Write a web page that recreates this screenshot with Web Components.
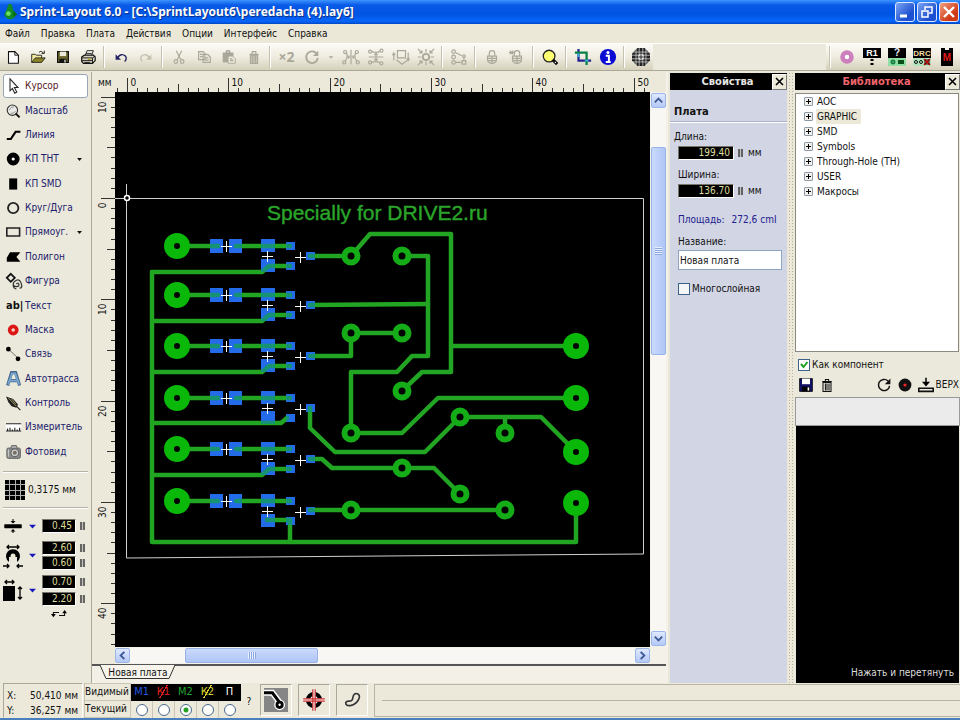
<!DOCTYPE html>
<html lang="ru">
<head>
<meta charset="utf-8">
<title>Sprint-Layout 6.0</title>
<style>
html,body{margin:0;height:100%}
body{font:10px/14px "DejaVu Sans Condensed","DejaVu Sans",sans-serif;color:#111;background:#ece9d8;overflow:hidden;
--face:#ebe9db;--edge:#aaa899;--navy:#20206c}
</style>
</head>
<body>
<app-window></app-window>
<script>
const BASE = `*{box-sizing:border-box}button,input{font:inherit;color:inherit;margin:0}button{padding:0;border:0;background:none}`;
function component(tag, css, html, ready) {
  const tpl = document.createElement('template');
  tpl.innerHTML = `<style>${BASE}${css}</style>`;
  customElements.define(tag, class extends HTMLElement {
    connectedCallback() {
      if (this.shadowRoot) return;
      const root = this.attachShadow({mode: 'open'});
      root.append(tpl.content.cloneNode(true));
      const body = document.createElement('template');
      body.innerHTML = typeof html === 'function' ? html(this) : html;
      root.append(body.content);
      if (ready) ready(this, root);
    }
  });
}

/* Icons, drawn in a 20 by 20 box */
const G = 'stroke="#aaa899" fill="none" stroke-width="1.3"';
const lock = `<g ${G}><path d="M7 9V6a3 3 0 0 1 6 0v3"/><path d="M5 9h10v4a5 4 0 0 1-10 0zM5 11.500h10M5.500 14h9M10 9v8"/></g>`;
const ICONS = {
  app: '<path d="M7 3a3 3 0 0 1 6 0l1 5a7 6 0 1 1-9 1z" fill="#128a28"/><circle cx="8" cy="12" r="3" fill="#6ddd63"/><path d="M14 8l5 5-5 4z" fill="#0a6d1d"/>',
  new: '<path d="M5 4h7l4 4v9H5z" fill="#fff" stroke="#111" stroke-width="1.200"/><path d="M12 4v4h4" fill="none" stroke="#111"/>',
  open: '<path d="M3 16V7h4l1 1h6v3" fill="#f0e89a" stroke="#222"/><path d="M3 16l4-5h11l-4 5z" fill="#8c8424" stroke="#222"/><path d="M11 5q3-3 5 1m1-3v3h-3" fill="none" stroke="#111"/>',
  save: '<path d="M4 4h12v12H4z" fill="#6b672a" stroke="#111" stroke-width="1.300"/><path d="M6.500 4h7v5h-7z" fill="#ece9d8"/><path d="M6 12h8v4.500H6z" fill="#111"/><path d="M11.500 13h1.500v3h-1.500z" fill="#ddd"/>',
  print: '<path d="M7 8l2-5h7l-2 5M8 6h6" fill="#fff" stroke="#111"/><path d="M3 10l3-2h10l2 2v4l-3 3H5l-2-2z" fill="#d6d3c3" stroke="#111" stroke-width="1.300"/><path d="M3 11h12l3-2M3 14h12m0-3v6M6 16h6" stroke="#111" fill="none"/><path d="M10 12.500h3" stroke="#b5a622" stroke-width="1.500"/>',
  undo: '<path d="M6 11q4-6 9-2 2 3-1 6" fill="none" stroke="#202060" stroke-width="1.500"/><path d="M4 7v6h6z" fill="#202060"/>',
  redo: '<path d="M14 11q-4-6-9-2-2 3 1 6" fill="none" stroke="#c4c1b1" stroke-width="1.500"/><path d="M16 7v6h-6z" fill="#c4c1b1"/>',
  cut: `<g ${G}><path d="M7 3l5 10M13 3L8 13"/><circle cx="6.500" cy="15" r="2"/><circle cx="13.500" cy="15" r="2"/></g>`,
  copy: `<g ${G}><path d="M4 4h5l2 2v7H4zM9 7h5l3 3v6H9z" fill="#eceadd"/><path d="M5.500 7h3M5.500 9.500h3M11 11h4M11 13.500h4"/></g>`,
  paste: `<path d="M3 5h12v11H3z" fill="#aaa899"/><path d="M7 3h4v3H7z" fill="#ccc9ba" stroke="#999"/><path d="M9 9h5l3 3v5H9z" fill="#eceadd" stroke="#aaa899"/><path d="M11 12h3m-3 2h4" ${G}/>`,
  trashg: `<g ${G}><path d="M5 7h10M8 7V4h4v3"/><path d="M6 8h8v9H6z" fill="#c6c3b4"/><path d="M8.500 8v8M11.500 8v8"/></g>`,
  trash: '<path d="M4 5.500h12M8 5V3h4v2M5 7h10v11H5zM8 8v9M10 8v9M12.500 8v9" fill="none" stroke="#111" stroke-width="1.300"/>',
  rotg: '<path d="M15 6a6.500 6.500 0 1 0 1.500 5" fill="none" stroke="#aaa899" stroke-width="2"/><path d="M17 3v6h-6z" fill="#aaa899"/>',
  rot: '<path d="M15 5a7 7 0 1 0 2 6" fill="none" stroke="#111" stroke-width="1.800"/><path d="M18 2v7h-7z" fill="#111"/>',
  drop: '<path d="M4 8h12l-6 6z" fill="#aaa899"/>',
  mirh: `<g ${G}><circle cx="3.500" cy="4.500" r="1.700"/><circle cx="16.500" cy="4.500" r="1.700"/><circle cx="2.500" cy="16" r="1.700"/><circle cx="17.500" cy="16" r="1.700"/><path d="M5 5.500q2 5-1.500 9M15 5.500q-2 5 1.500 9M10 2v16M6 10h3M11 10h3M7.500 8v4M12.500 8v4"/></g>`,
  mirv: `<g ${G}><circle cx="3.500" cy="4" r="1.700"/><circle cx="16" cy="3" r="1.700"/><circle cx="3.500" cy="16" r="1.700"/><circle cx="16" cy="17" r="1.700"/><path d="M5 4q6 2 9.500-.5M5 16q6-2 9.500.5M2 10h16M10 6.500v7M8 8l2-2 2 2M8 12l2 2 2-2"/></g>`,
  flip: `<g ${G}><path d="M6 3h9v8H6zM2 14V6M.500 8L2 5.500 3.500 8M18 5v9M16.500 11.500L18 14l1.500-2.500M5 13l6 5 6-4"/></g>`,
  snap: `<g ${G}><circle cx="10" cy="10" r="3.500" stroke-width="2"/><path d="M1 1l4 4M19 1l-4 4M1 19l4-4M19 19l-4-4M2.500 5.500h3v-3M17.500 5.500h-3v-3M2.500 14.500h3v3M17.500 14.500h-3v3M1 10h4M15 10h4M10 1v4M10 15v4"/></g>`,
  nodes: `<g ${G}><circle cx="4" cy="4" r="2"/><circle cx="4" cy="10" r="2"/><circle cx="4" cy="16" r="2"/><path d="M6 5l7 3.500M6 16h7M15.500 13v-3"/><path d="M13.500 14h4v4h-4z"/><circle cx="15.500" cy="9" r="1.500"/></g>`,
  lock: lock,
  unlock: lock + `<path d="M2 3l4 4M6 3L2 7M1 5h6" ${G}/>`,
  find: '<circle cx="9" cy="9" r="6.500" fill="#ffff72" stroke="#222" stroke-width="1.400"/><path d="M13 13l5 5" stroke="#111" stroke-width="3.500"/><circle cx="16" cy="16" r=".800" fill="#eee"/>',
  crop: '<path d="M5 1v13h14" fill="none" stroke="#23238e" stroke-width="2.500"/><path d="M1 5h13v14" fill="none" stroke="#078043" stroke-width="2.500"/><path d="M5 6v4M12 14h4" stroke="#2fb7dc" stroke-width="2"/>',
  info: '<circle cx="10" cy="10" r="9" fill="#0a0ad4"/><circle cx="10" cy="5" r="1.700" fill="#fff"/><path d="M7.500 8.500H11V15M7.500 15.500h5.500" stroke="#fff" stroke-width="2.200" fill="none"/>',
  mesh: '<path d="M6 0h8l6 6v8l-6 6H6l-6-6V6z" fill="#222"/><path d="M1 4.500h18M0 8h20M0 12h20M1 15.500h18M4.500 1v18M8 0v20M12 0v20M15.500 1v18" stroke="#ddd" stroke-width=".800"/><circle cx="10" cy="10" r="3.500" fill="#ddd"/><path d="M7 10h6m-3-3v6" stroke="#222"/>',
  ring: '<circle cx="10" cy="10" r="4.500" fill="#fff" stroke="#cc7fbc" stroke-width="4.500"/>',
  r1: '<path d="M1 1h18v10H1z" fill="#000"/><path d="M10 12v2M10 16v2" stroke="#000" stroke-width="3"/><text x="10" y="9" font-family="Liberation Sans" font-size="9" font-weight="700" text-anchor="middle" fill="#fff">R1</text>',
  quest: '<path d="M1 1h18v10H1z" fill="#000"/><path d="M1 11h18v8H1z" fill="#8fdfa5"/><path d="M11 13h6v4h-6z" fill="#064f16"/><circle cx="6" cy="15" r="2" fill="#3aa45a" stroke="#063"/><text x="10" y="9" font-family="Liberation Sans" font-size="10" font-weight="700" text-anchor="middle" fill="#e7efff">?</text>',
  drc: '<path d="M1 1h18v10H1z" fill="#000"/><path d="M1 11h18v8H1z" fill="#b3e3bd"/><circle cx="4" cy="15" r="1.500" fill="none" stroke="#111"/><circle cx="9" cy="15" r="1.500" fill="none" stroke="#111"/><path d="M12 12l6 6m0-6l-6 6" stroke="#c00" stroke-width="1.500"/><path d="M13 13h4v4h-4z" fill="none" stroke="#400"/><text x="10" y="9" font-family="Liberation Sans" font-size="8" font-weight="700" text-anchor="middle" fill="#f3dba3">DRC</text>',
  macro: '<path d="M4 1h4v2h4V1h4v18H4z" fill="#000"/><text x="10" y="14" font-family="Liberation Sans" font-size="10" font-weight="700" text-anchor="middle" fill="#e01818">M</text>',
  cursor: '<path d="M5 1v15l3-3 3 6 2.500-1.500L10.500 12H15z" fill="#fff" stroke="#222" stroke-width="1.300"/>',
  zoom: '<circle cx="8" cy="9" r="6.500" fill="#e8e8e4" stroke="#333" stroke-width="1.400"/><path d="M4 9q2-5 6-4M6 13q5 0 6-3" stroke="#888" fill="none"/><path d="M12 13l5 5" stroke="#111" stroke-width="2.500"/>',
  line: '<path d="M1 15h5l6-9h6" fill="none" stroke="#000" stroke-width="2.600"/>',
  tht: '<circle cx="9" cy="10" r="5" fill="#fff" stroke="#000" stroke-width="6"/>',
  smd: '<path d="M4 3h10v14H4z"/>',
  circle: '<circle cx="9" cy="10" r="6.500" fill="none" stroke="#222" stroke-width="2.300"/>',
  rect: '<path d="M1 5h16v10H1z" fill="none" stroke="#222" stroke-width="2"/>',
  poly: '<path d="M5 4h13l-5 6 5 6H1v-5z"/>',
  shape: '<path d="M6 1l5 5-5 5-5-5z" fill="none" stroke="#111" stroke-width="2.200"/><path d="M13 14q2-3 3 0t-3 3-4-3 4-5 6 4-2 6M9 15q0 4 4 5" fill="none" stroke="#333" stroke-width="1.500"/>',
  mask: '<circle cx="9" cy="10" r="4.500" fill="#fbd0c8" stroke="#dc1515" stroke-width="4.500"/>',
  link: '<path d="M3 4l12 11" stroke="#555"/><circle cx="3" cy="4" r="2" stroke="#000" stroke-width="2"/><circle cx="15" cy="16" r="2" stroke="#000" stroke-width="2"/>',
  auto: '<path d="M2 18L7 2h5l5 16M5 12h9" stroke="#46688c" stroke-width="4" fill="none"/><path d="M2.500 17L7.500 3h4l5 14M5 12h9" stroke="#79a7d0" stroke-width="2.300" fill="none"/>',
  probe: '<path d="M0 2l9 3 6 7-2 4-6-2-4-5z" fill="#222"/><path d="M3 4l10 10M7 5l5 6" stroke="#bbb26b"/><path d="M13 14l5 5" stroke="#111" stroke-width="1.300"/>',
  meas: '<path d="M0 5h19v10H0z" fill="#fff"/><path d="M0 6h19M0 15h19M2 15v-3M5 15v-4M8 15v-2M11 15v-4M14 15v-2M17 15v-4" stroke="#222" stroke-width="1.400"/>',
  photo: '<rect x="1" y="5" width="17" height="13" rx="2" fill="#8b8d8e" stroke="#555"/><path d="M6 5l1-3h6l1 3" fill="#aaa" stroke="#555"/><circle cx="11" cy="11" r="5" fill="#ccc" stroke="#444"/><circle cx="11" cy="11" r="2.500" fill="#776d64"/><path d="M3 7v9" stroke="#ddd"/>',
  grid: '<path d="M0 0h20v20H0z" fill="#000"/><path d="M0 4.500h20M0 10.500h20M0 15.500h20M4.500 0v20M10.500 0v20M15.500 0v20" stroke="#b0b0b0" stroke-width="1"/>',
  width: '<path d="M2 9h16v2.500H2z" stroke="#000" stroke-width="1.500" stroke-linejoin="round"/><path d="M7.500 5h5L10 7.500zM7.500 15.500h5L10 13z"/><path d="M10 3v3M10 15v2" stroke="#000"/>',
  pad: '<path d="M4 1h12M6-1L4 1l2 2M14-1l2 2-2 2" fill="none" stroke="#000" stroke-width="1.300"/><path d="M6 16a7 7 0 1 1 8 0V11H6z"/><circle cx="10" cy="10" r="2.500" fill="#ece9d8"/><path d="M0 20h6M4 18l2 2-2 2M20 20h-6M16 18l-2 2 2 2" fill="none" stroke="#000" stroke-width="1.300"/>',
  size: '<path d="M2 1h9M4-1L2 1l2 2M9-1l2 2-2 2M17 6v12M15 8l2-2 2 2M15 16l2 2 2-2" fill="none" stroke="#000" stroke-width="1.300"/><path d="M0 5h12v15H0z"/>',
  swap: '<path d="M3 12V8h7M17 8v4h-7" fill="none" stroke="#111" stroke-width="1.300"/><path d="M0 10h6l-3 4zM14 9h6l-3-4z"/>',
  tri: '<path d="M0 5h20L10 16z" fill="#1818b8"/>',
  trib: '<path d="M3 6h14l-7 8z" fill="#111"/>',
  dot: '<circle cx="10" cy="10" r="8" fill="#111"/><circle cx="10" cy="10" r="2" fill="#f22"/>',
  down: '<path d="M10 1v7M1 14h18v4H1z" stroke="#111" stroke-width="2" fill="none"/><path d="M5 6h10l-5 6z"/>',
  saveb: '<path d="M2 2h16v16H2z" fill="#11116c" stroke="#000"/><path d="M5 2h10v7H5z" fill="#fff"/><path d="M5 12h10v6H5z" fill="#000"/><path d="M12 13h2v4h-2z" fill="#fff"/>',
  route: '<path d="M0 0h20v20H0z" fill="#858585"/><path d="M0 4h7l6 8" stroke="#fff" stroke-width="5" fill="none"/><circle cx="13" cy="14" r="4.500" fill="#fff"/><path d="M0 4h7l6 8" stroke="#000" stroke-width="2.500" fill="none"/><circle cx="13" cy="14" r="2.200" fill="#fff" stroke="#000" stroke-width="2.400"/>',
  target: '<circle cx="10" cy="10" r="5" fill="none" stroke="#000" stroke-width="3.500"/><path d="M10 1v18M1 10h18" stroke="#eee" stroke-width="2.400"/><path d="M9 1v18M11 1v18M1 9h18M1 11h18" stroke="#cf3030"/>',
  blob: '<path d="M16 3q4 2 1 7-3 5-8 6-6 1-6-3 1-2 6-2 2-1 2-4 1-5 5-4z" fill="none" stroke="#333" stroke-width="1.800"/>'
};
component('ui-icon', `:host{display:inline-flex;width:16px;height:16px;flex:none}svg{width:100%;height:100%;display:block;overflow:visible}`,
  el => `<svg viewBox="0 0 20 20" aria-hidden="true">${ICONS[el.getAttribute('name')]}</svg>`);

component('title-bar', `:host{display:flex;align-items:center;height:24px;padding:0 1px 0 2px;gap:2px;color:#fff;
background:linear-gradient(#3b95ff 0,#0a5ae8 5px,#0054e2 60%,#0866fb 88%,#0148c4)}
h1{flex:1;margin:0;font:700 12px/20px "Noto Sans",sans-serif;text-shadow:1px 1px #0b2f86;white-space:nowrap}
button{width:20px;height:20px;border:1px solid #dde8ff;border-radius:3px;background:linear-gradient(135deg,#7ba4f5,#1d50d0 70%)}
button.c{background:linear-gradient(135deg,#f0a080,#cf3a16 70%)}svg{display:block;width:18px;height:18px}div{display:flex;gap:2px}`,
`<ui-icon name="app"></ui-icon><h1>Sprint-Layout 6.0 - [C:\\SprintLayout6\\peredacha (4).lay6]</h1>
<div><button aria-label="Свернуть"><svg><path d="M4 13h7" stroke="#fff" stroke-width="3"/></svg></button>
<button aria-label="Восстановить"><svg fill="none" stroke="#fff" stroke-width="1.500"><path d="M4 8h6v6H4zM7 7V4h7v6h-3"/></svg></button>
<button class="c" aria-label="Закрыть"><svg><path d="M4 4l10 10M14 4L4 14" stroke="#fff" stroke-width="2.400"/></svg></button></div>`);

component('menu-bar', `:host{display:flex;height:19px;align-items:center;background:#ebe8d8;padding-left:5px;gap:11px}button{color:#111}`,
  ['Файл','Правка','Плата','Действия','Опции','Интерфейс','Справка'].map(t => `<button>${t}</button>`).join(''));

const tb = (n, l) => `<button aria-label="${l}"><ui-icon name="${n}"></ui-icon></button>`;
component('tool-bar', `:host{display:flex;height:28px;border-top:1px solid #fff;border-bottom:1px solid #aaa899;background:var(--face)}
div{display:flex;align-items:center;background:linear-gradient(#fbfaf5,#efecdf 50%,#d5d1bb)}
.gap{flex:1;background:none}button{width:25px;height:26px;display:flex;align-items:center;justify-content:center}
button.n{width:14px}button.n ui-icon{width:8px;height:8px}button.x{font:700 14px/16px "Open Sans",sans-serif;color:#aaa899}
i{width:8px;height:22px;background:linear-gradient(90deg,#c5c2b0 1px,#fff 1px,#fff 2px,transparent 2px) 3px 0 no-repeat}
ui-icon{width:18px;height:18px}.r ui-icon{width:20px;height:20px}.r{padding-right:1px}`,
`<div>${tb('new','Новый')}${tb('open','Открыть')}${tb('save','Сохранить')}${tb('print','Печать')}<i></i>${tb('undo','Отменить')}${tb('redo','Повторить')}<i></i>
${tb('cut','Вырезать')}${tb('copy','Копировать')}${tb('paste','Вставить')}${tb('trashg','Удалить')}<i></i><button class="x">×2</button>${tb('rotg','Повернуть')}<button class="n" aria-label="Угол"><ui-icon name="drop"></ui-icon></button>
${tb('mirh','Отразить по горизонтали')}${tb('mirv','Отразить по вертикали')}${tb('flip','На другую сторону')}${tb('snap','К сетке')}<i></i>${tb('nodes','Связи')}<i></i>${tb('lock','Закрепить')}${tb('unlock','Открепить')}<i></i>${tb('find','Найти')}<i></i>${tb('crop','Обрезать')}${tb('info','Инфо')}<i></i>${tb('mesh','Металлизация')}</div>
<div class="gap"></div><div class="r"><i></i>${tb('ring','Площадка')}${tb('r1','Компонент')}${tb('quest','Свойства')}${tb('drc','DRC')}${tb('macro','Макрос')}</div>`);

component('num-field', `:host{display:inline-flex;align-items:center;gap:4px}
input{width:var(--w,34px);height:14px;border:1px solid;border-color:#77756a #fff #fff #77756a;border-radius:0;background:#000;color:#dede9c;text-align:right;padding:0 3px 0 0;outline:0}
span{width:5px;height:8px;background:linear-gradient(90deg,#444 2px,#bbb 2px,#bbb 3px,#444 3px);opacity:.8}`,
  el => `<input value="${el.getAttribute('value')}" aria-label="${el.getAttribute('label')}"><span></span>`);

const TOOLS = [['cursor','Курсор'],['zoom','Масштаб'],['line','Линия'],['tht','КП THT',1],['smd','КП SMD'],['circle','Круг/Дуга'],['rect','Прямоуг.',1],['poly','Полигон'],['shape','Фигура'],['','Текст'],['mask','Маска'],['link','Связь'],['auto','Автотрасса'],['probe','Контроль'],['meas','Измеритель'],['photo','Фотовид']];
component('side-tools', `:host{display:flex;flex-direction:column;width:92px;padding:2px 3px 0;border-right:1px solid var(--edge);background:var(--face)}
nav{display:grid;grid-template-rows:repeat(16,1fr);height:390px;flex:none}
nav button{display:flex;align-items:center;text-align:left;color:var(--navy);padding:0 2px;border:1px solid transparent;white-space:nowrap}
nav button span{flex:1;padding-left:3px}nav .n{width:7px;height:7px;margin-right:2px}
nav button:first-child{background:#fff;border-color:#9aa4b8;border-radius:3px;color:#5c1a28}
b{width:16px;font-size:11px;color:#111;white-space:nowrap}
hr{width:100%;height:2px;border:0;margin:7px 0;border-top:1px solid #b6b3a2;border-bottom:1px solid #fff}
.g{display:flex;align-items:center;gap:3px;padding-left:2px;height:20px;white-space:nowrap}.g ui-icon{width:20px;height:20px}
.p{display:grid;grid-template-columns:22px 12px 1fr;align-items:center;margin-bottom:5px;column-gap:1px}
.p>div{display:grid;gap:1px;padding-left:3px}.p ui-icon{width:20px;height:20px}.p .t{width:7px;height:7px;margin-left:3px}.p .big{height:26px}
.last{margin:-5px 0 0 46px;width:20px;height:16px}.p.s>div{gap:3px}`,
`<nav>${TOOLS.map(([i,t,d]) => `<button>${i ? `<ui-icon name="${i}"></ui-icon>` : '<b>ab|</b>'}<span>${t}</span>${d ? '<ui-icon class="n" name="trib"></ui-icon>' : ''}</button>`).join('')}</nav>
<hr><div class="g"><ui-icon name="grid"></ui-icon><span>0,3175 мм</span></div><hr>
<div class="p"><ui-icon name="width"></ui-icon><ui-icon class="t" name="tri"></ui-icon><div><num-field value="0.45" label="Ширина дорожки"></num-field></div></div>
<div class="p"><ui-icon class="big" name="pad"></ui-icon><ui-icon class="t" name="tri"></ui-icon><div><num-field value="2.60" label="Диаметр"></num-field><num-field value="0.60" label="Отверстие"></num-field></div></div>
<div class="p s"><ui-icon class="big" name="size"></ui-icon><ui-icon class="t" name="tri"></ui-icon><div><num-field value="0.70" label="Ширина"></num-field><num-field value="2.20" label="Высота"></num-field></div></div>
<ui-icon class="last" name="swap"></ui-icon>`);

/* Ruler: one unit of the board is 10.13 px on screen */
component('board-ruler', `:host{display:block;overflow:hidden;background:#ece9db;min-width:0;min-height:0}svg{display:block;width:100%;height:100%}text{font-size:10px;fill:#111}`,
  el => {
    const v = el.hasAttribute('vertical'), zero = v ? 106 : 12;
    let s = '';
    for (let i = v ? -10 : -1; i < (v ? 45 : 53); i++) {
      const p = Math.round(zero + i * 10.13) + .5;
      const n = i % 10 === 0 ? 14 : i % 5 === 0 ? 8 : 4;
      if (v) {
        s += `<path d="M${23 - n} ${p}h${n}" stroke="#333"/>`;
        if (n === 14) s += `<text transform="translate(14 ${p + 4}) rotate(-90)" text-anchor="end">${Math.abs(i)}</text>`;
      } else {
        s += `<path d="M${p} ${20 - n}v${n}" stroke="#333"/>`;
        if (n === 14) s += `<text x="${p + 3}" y="14">${i}</text>`;
      }
    }
    return `<svg>${s}</svg>`;
  });

function boardSvg() {
  const rows = [246, 295, 346, 398, 449, 501];
  const big = [[576,346],[576,398],[576,452],[576,503]];
  const small = [[351,256],[402,256],[351,333],[402,333],[402,391],[351,433],[460,417],[505,433],[402,468],[460,494],[351,510],[505,510]];
  const tracks = ['M310 256H351L370 234H451V372H422L402 391','M451 346H576','M402 256H428V356H412L397 372H351V433H402L438 398H576','M310 305L428 304','M310 356H351V333H402','M310 408V428L335 452H425L460 417H541L576 452','M505 417V433','M310 459H322L332 468H434L460 494','M310 510H505','M152 272V542H576V503','M290 542V520H267'];
  let blue = '', cross = '';
  rows.forEach((y, r) => {
    big.push([177, y]);
    tracks.push(`M177 ${y}H218M236 ${y}H290`);
    if (r < 3 || r === 4) tracks.push(`M152 ${y + 26}H262L269 ${y + 20}H290`);
    if (r === 3) tracks.push(`M152 ${y + 25}H281L287 ${y + 20}`);
    blue += [[210,-7,13,14],[229,-7,13,14],[261,-7,14,13],[261,13,14,13],[286,-4,9,8],[286,16,9,8],[306,6,9,8]].map(b => `<rect x="${b[0]}" y="${y + b[1]}" width="${b[2]}" height="${b[3]}"/>`).join('');
    cross += [[226,0],[267,10],[300,11]].map(c => `M${c[0] - 5} ${y + c[1] + .5}h11M${c[0] + .5} ${y + c[1] - 5}v11`).join('');
  });
  const t = tracks.map(d => `<path d="${d}"/>`).join('');
  return `<svg role="img" aria-label="Плата"><g transform="translate(-115 -92)">
<path d="M126.500 198.500H643.500V554L126.500 558Z" fill="none" stroke="#cfcfcf"/>
<g fill="none" stroke="#22a522" stroke-width="4.500" stroke-linejoin="round" stroke-linecap="round">${t}</g>
<g fill="#256bea">${blue}</g>
<g fill="none" stroke="#12a04a" stroke-width="4.500" stroke-linejoin="round" stroke-linecap="round" opacity=".75" clip-path="url(#pads)">${t}</g>
<clipPath id="pads">${blue}</clipPath>
<g fill="#000" stroke="#0ab80a">${big.map(p => `<circle cx="${p[0]}" cy="${p[1]}" r="8" stroke-width="10"/>`).join('')}</g>
<g fill="#000" stroke="#14ad18" stroke-width="6">${small.map(p => `<circle cx="${p[0]}" cy="${p[1]}" r="6.500"/>`).join('')}</g>
<path d="${cross}" stroke="#fff"/>
<path d="M126.500 184v29M115 198.500h26" stroke="#ccc" fill="none"/><circle cx="127" cy="198" r="2.500" fill="#000" stroke="#fff" stroke-width="1.500"/>
<text x="267" y="220">Specially for DRIVE2.ru</text></g></svg>`;
}
component('board-canvas', `:host{display:block;background:#000;overflow:hidden;min-width:0;min-height:0}svg{display:block;width:100%;height:100%}
text{font:21px "Liberation Sans",sans-serif;fill:#2aa52a;stroke:#2aa52a;stroke-width:.4px}`, boardSvg);

component('scroll-bar', `:host{display:flex;background:#f8f7f3;min-width:0;min-height:0}:host([vertical]){flex-direction:column}
button{flex:none;width:15px;height:15px;border:1px solid #9db6ea;border-radius:2px;background:linear-gradient(#dfe9ff,#b5c9f7);display:flex}
svg{width:100%;height:100%}.a{flex:var(--before)}.b{flex:var(--after)}
.thumb{flex:var(--size);border:1px solid #98b2ea;border-radius:2px;background:linear-gradient(#cbdafd,#aec5f5);display:flex;align-items:center;justify-content:center}
:host([vertical]) .thumb{background:linear-gradient(90deg,#cbdafd,#aec5f5)}
.thumb i{width:8px;height:7px;background:repeating-linear-gradient(90deg,#e8f0ff 0 1px,#8ba8e0 1px 2px)}
:host([vertical]) .thumb i{width:7px;height:8px;background:repeating-linear-gradient(#e8f0ff 0 1px,#8ba8e0 1px 2px)}`,
  el => {
    const [p, q] = el.hasAttribute('vertical') ? ['M3 9l4-4 4 4','M3 5l4 4 4-4'] : ['M9 3L5 7l4 4','M5 3l4 4-4 4'];
    const b = (d, l) => `<button aria-label="${l}"><svg viewBox="0 0 14 14"><path d="${d}" fill="none" stroke="#3d5a94" stroke-width="2"/></svg></button>`;
    return b(p, 'Назад') + '<div class="a"></div><div class="thumb"><i></i></div><div class="b"></div>' + b(q, 'Вперёд');
  });

component('work-area', `:host{display:grid;grid-template:20px 1fr 17px 19px/23px 1fr 16px;min-width:0;min-height:0;background:#f3f1e8;padding-right:2px}
.mm{padding:4px 0 0 6px;background:#ece9db}.corner{background:#ece9db}board-ruler[vertical]{grid-row:2/4}
.tabs{grid-column:1/4;border-top:2px solid #555;background:#f2f0e7;padding-left:8px}
.tabs button{position:relative;display:block;width:76px;height:15px;color:#111;margin-top:-1px}.tabs svg{position:absolute;inset:0;width:76px;height:15px}.tabs span{position:relative;line-height:14px}
.v{margin:1px 0 1px 1px;--before:39 1 0;--size:206 1 0;--after:277 1 0}.h{margin:1px 0;--before:55 1 0;--size:132 1 0;--after:318 1 0}.end{background:#f3f1e8}`,
`<div class="mm">мм</div><board-ruler></board-ruler><div class="corner"></div>
<board-ruler vertical></board-ruler><board-canvas></board-canvas><scroll-bar class="v" vertical></scroll-bar>
<scroll-bar class="h"></scroll-bar><div class="end"></div>
<div class="tabs"><button><svg><path d="M0 0L6 13.500H69L75 0" fill="#f6f4eb" stroke="#333"/></svg><span>Новая плата</span></button></div>`);

component('panel-title', `:host{display:flex;height:17px;background:#000;align-items:center;text-align:center}
h2{flex:1;margin:0;padding-left:13px;font:700 11px/16px "DejaVu Sans Condensed","DejaVu Sans",sans-serif}
button{width:15px;height:16px;background:#ece9d8;border:1px solid;border-color:#fff #777 #777 #fff}svg{display:block;width:13px;height:13px}`,
`<h2><slot></slot></h2><button aria-label="Закрыть"><svg><path d="M3 3l7 7M10 3l-7 7" stroke="#000" stroke-width="1.600"/></svg></button>`);

component('properties-panel', `:host{display:flex;flex-direction:column;width:120px;background:#d2d5e4;border:solid #e9e7da;border-width:1px 1px 0 2px}
panel-title{color:#e4e4e4}h3{margin:0;font:700 11px/14px "DejaVu Sans Condensed","DejaVu Sans",sans-serif;padding:15px 0 2px 4px;border-bottom:1px solid #aab0c8;box-shadow:0 1px #fff}
.b{display:flex;flex-direction:column;padding:8px 5px 0 8px}.f{display:flex;align-items:center;gap:5px;--w:56px;height:16px;margin:1px 0 7px}
label,.area{white-space:nowrap}.first{margin-left:-4px}.area{color:#20208c;display:flex;gap:7px;margin:7px 0 8px}
.name{height:20px;width:100%;border:1px solid #8fa5c4;background:#fff;padding:0 1px;outline:0;margin:1px 0 12px}
.c{display:flex;align-items:center;gap:2px}.c input{appearance:none;width:12px;height:12px;flex:none;border:1px solid #3c6288;background:#f4f6f8}`,
`<panel-title>Свойства</panel-title><h3>Плата</h3><div class="b"><label class="first">Длина:</label><div class="f"><num-field value="199.40" label="Длина"></num-field>мм</div>
<label>Ширина:</label><div class="f"><num-field value="136.70" label="Ширина"></num-field>мм</div>
<div class="area"><span>Площадь:</span><span>272,6 cmI</span></div><label for="n">Название:</label><input class="name" id="n" value="Новая плата"><label class="c"><input type="checkbox">Многослойная</label></div>`);

component('library-panel', `:host{display:flex;flex-direction:column;width:165px;background:var(--face);padding-top:1px;min-height:0}
panel-title{color:#f0646c}ul{list-style:none;margin:3px 1px 0 0;padding:0 0 0 8px;height:259px;flex:none;background:#fff;border:1px solid #8c8a80}
li{height:15px;display:flex;align-items:center;gap:3px}li span{padding:0 4px 0 1px;line-height:15px}li.on span{background:#ece9d8}
li button{width:9px;height:9px;border:1px solid #8c9aa8;border-radius:1px;background:linear-gradient(#000,#000) 1px 3px/5px 1px no-repeat,linear-gradient(#000,#000) 3px 1px/1px 5px no-repeat,#f2f0ea}
.c{display:flex;align-items:center;gap:2px;height:22px;padding:3px 0 0 3px}.c input{appearance:none;width:12px;height:12px;margin:0;border:1px solid #3c6288;background:#fff}
.c .k{position:relative;display:flex}.c svg{position:absolute;inset:0;width:12px;height:12px}
.r{display:flex;align-items:center;gap:5px;height:23px;padding:0 1px 2px 3px}.r button{display:flex;align-items:center;gap:2px}.r ui-icon{width:16px;height:16px}.s{flex:1}
.h{height:29px;border:1px solid #999;background:#ebebeb;flex:none}.pv{flex:1;background:#000;color:#ddd;display:flex;align-items:flex-end;justify-content:flex-end;padding:0 5px 3px 0;margin:0 1px}`,
`<panel-title>Библиотека</panel-title><ul>${['AOC','GRAPHIC','SMD','Symbols','Through-Hole (TH)','USER','Макросы'].map((t, i) => `<li class="${i === 1 ? 'on' : ''}"><button aria-label="Раскрыть ${t}"></button><span>${t}</span></li>`).join('')}</ul>
<label class="c"><span class="k"><input type="checkbox" checked><svg><path d="M3 5l2.500 3L9.500 3" fill="none" stroke="#21a121" stroke-width="2"/></svg></span>Как компонент</label>
<div class="r"><button aria-label="Сохранить"><ui-icon name="saveb"></ui-icon></button><button aria-label="Удалить"><ui-icon name="trash"></ui-icon></button><span class="s"></span><button aria-label="Повернуть"><ui-icon name="rot"></ui-icon></button><button aria-label="Точка"><ui-icon name="dot"></ui-icon></button><button><ui-icon name="down"></ui-icon>ВЕРХ</button></div>
<div class="h"></div><div class="pv">Нажать и перетянуть</div>`);

component('status-bar', `:host{display:flex;height:37px;background:#ece9db;border-bottom:2px solid #4a80bd;gap:1px;padding-left:3px;white-space:nowrap}
.xy{width:80px;border:1px solid;border-color:#aaa899 #fff transparent #aaa899;padding:4px 4px 0 3px;display:grid;grid-template-columns:1fr auto;align-content:start;line-height:15px;height:35px}
table{border-collapse:collapse;height:35px}th{font-weight:400;text-align:left;padding:0;width:46px;border:1px solid #c9c6b8}
td{width:22px;padding:0;text-align:center;border-left:1px solid #c9c6b8}tr{height:17px}tr:first-child td{background:#000;font-size:11px;border:0}
input{appearance:none;width:12px;height:12px;border:1px solid #49698c;border-radius:50%;background:#fff;display:block;margin:2px auto 0}
input:checked{background:radial-gradient(#21a121 0 2px,#fff 3px)}.x{background:linear-gradient(120deg,transparent 47%,currentColor 47% 54%,transparent 54%)}
.q{padding:12px 8px 0 5px}.t{width:32px;height:32px;margin:1px 5px 0 0;border:1px solid;border-color:#aaa899 #fff #fff #aaa899;display:flex;align-items:center;justify-content:center}
.t ui-icon{width:24px;height:24px}.m ui-icon{width:18px;height:18px}.rest{flex:1;border:1px solid #b8b5a6;border-right:0;margin:1px 0 0;display:flex;align-items:center;padding-left:7px;height:33px}.rest i{flex:1;height:1px;background:#b8b5a6}`,
`<div class="xy"><span>X:</span><span>50,410 мм</span><span>Y:</span><span>36,257 мм</span></div>
<table><tr><th>Видимый</th><td style="color:#2458e0">М1</td><td style="color:#e02020"><span class="x">К1</span></td><td style="color:#22a530">М2</td><td style="color:#d8d22c"><span class="x">К2</span></td><td style="color:#fff">П</td></tr>
<tr><th>Текущий</th>${['М1','К1','М2','К2','П'].map((l, i) => `<td><input type="radio" name="layer" aria-label="${l}" ${i === 2 ? 'checked' : ''}></td>`).join('')}</tr></table>
<span class="q">?</span><button class="t" aria-label="Трасса"><ui-icon name="route"></ui-icon></button><button class="t" aria-label="Перекрестие"><ui-icon name="target"></ui-icon></button><button class="t m" aria-label="Контур"><ui-icon name="blob"></ui-icon></button><div class="rest"><i></i></div>`);

component('app-window', `:host{display:flex;flex-direction:column;height:100vh}main{flex:1;display:grid;grid-template-columns:auto 1fr auto 7px auto;min-height:0;padding-top:1px}
.split{background:radial-gradient(#b5b2a2 1px,transparent 1px) 0 0/3px 3px,#ece9db}`,
`<title-bar></title-bar><menu-bar></menu-bar><tool-bar></tool-bar><main><side-tools></side-tools><work-area></work-area><properties-panel></properties-panel><div class="split"></div><library-panel></library-panel></main><status-bar></status-bar>`);
</script>
</body>
</html>
